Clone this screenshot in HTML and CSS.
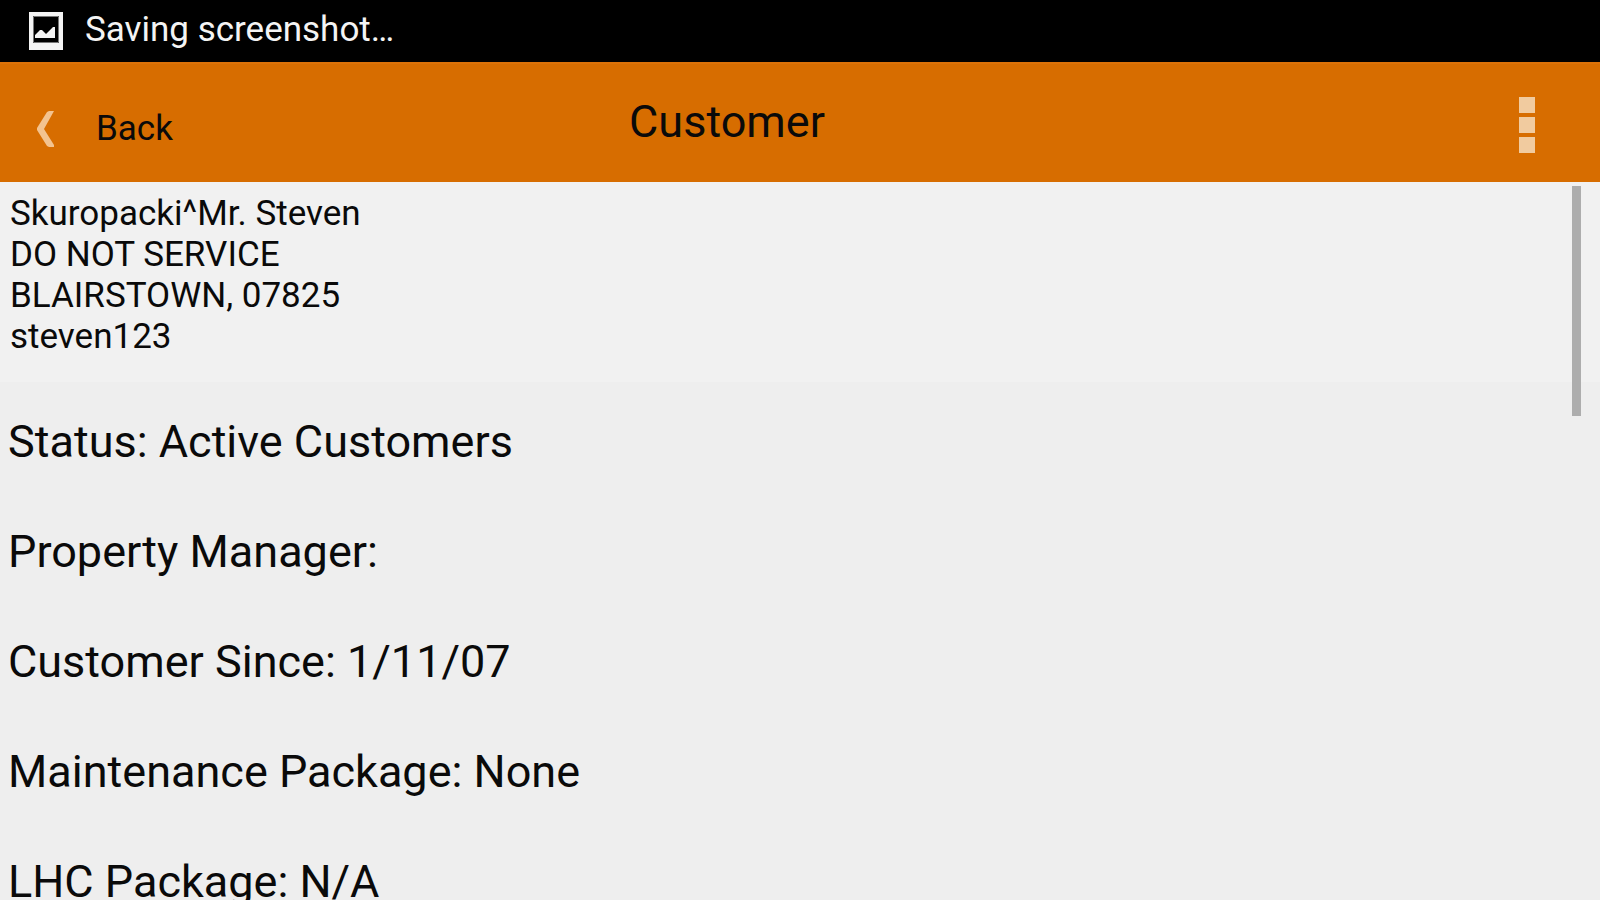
FILE: index.html
```html
<!DOCTYPE html>
<html lang="en">
<head>
<meta charset="utf-8">
<title>Customer</title>
<link rel="stylesheet" href="styles.css">
</head>
<body>
<div class="screen">
  <div class="statusbar" role="status">
    <svg class="statusbar-icon" width="36" height="40" viewBox="0 0 36 40" aria-hidden="true">
      <path fill="#f4f4f4" fill-rule="evenodd" d="M1 2H35V40H1ZM5 6V33H31V6Z"/>
      <path fill="none" stroke="#777" d="M5.500 6.500H30.500V32.500H5.500Z"/>
      <path fill="#f4f4f4" d="M7 28V25L12 20H14L18 24L25 17H27V28Z"/>
    </svg>
    <span>Saving screenshot…</span>
  </div>
  <header class="appbar">
    <button class="back" type="button">
      <svg width="18" height="38" viewBox="0 0 18 38" aria-hidden="true">
        <path fill="#f3c38f" d="M11 2L13 1H18L8 19L18 35V37H13L11 36L1 20V18Z"/>
      </svg>
      <span>Back</span>
    </button>
    <h1 class="title">Customer</h1>
    <button class="menu" type="button" aria-label="More options">
      <svg width="16" height="56" viewBox="0 0 16 56" aria-hidden="true">
        <path fill="#f1cb9f" d="M0 0H16V16H0ZM0 20H16V36H0ZM0 40H16V56H0Z"/>
      </svg>
    </button>
  </header>
  <main class="content">
    <address class="contact">
      Skuropacki^Mr. Steven<br>
      DO NOT SERVICE<br>
      BLAIRSTOWN, 07825<br>
      steven123
    </address>
    <ul class="details">
      <li>Status: Active Customers</li>
      <li>Property Manager:</li>
      <li>Customer Since: 1/11/07</li>
      <li>Maintenance Package: None</li>
      <li>LHC Package: N/A</li>
    </ul>
    <div class="scroll-thumb"></div>
  </main>
</div>
</body>
</html>
```
FILE: styles.css
```css
* {
  box-sizing: border-box;
}

body {
  margin: 0;
  background: #eee;
  color: #0a0a0a;
  font-family: Roboto, "Liberation Sans", sans-serif;
  font-size: 35px;
  line-height: 41px;
}

.screen {
  display: flex;
  flex-direction: column;
  height: 100vh;
  overflow: hidden;
}

.statusbar {
  display: flex;
  flex: none;
  align-items: center;
  gap: 21px;
  padding: 9px 28px 12px;
  background: #000;
  color: #f4f4f4;
}

.statusbar-icon {
  flex: none;
}

.appbar {
  display: grid;
  flex: none;
  grid-template-columns: 200px 1fr 346px;
  min-height: 120px;
  background: #d76d00;
  border-top: 2px solid #dc7208;
}

.back,
.menu {
  display: flex;
  align-items: center;
  border: 0;
  background: none;
  color: inherit;
  font: inherit;
  cursor: pointer;
}

.back {
  gap: 42px;
  padding: 11px 0 0 36px;
}

.menu {
  justify-content: flex-end;
  padding: 4px 65px 0 0;
}

.title {
  align-self: center;
  margin: 0;
  padding-bottom: 2px;
  font-size: 45px;
  font-weight: 400;
  line-height: 54px;
  text-align: center;
}

.content {
  position: relative;
  flex: 1;
  min-height: 0;
  overflow: hidden;
  background: linear-gradient(#f1f1f1 200px, #eee 200px);
}

.contact {
  padding: 11px 10px 0;
  font-style: normal;
}

.details {
  display: grid;
  gap: 56px;
  margin: 0;
  padding: 58px 8px 0;
  list-style: none;
  font-size: 45px;
  line-height: 54px;
}

.scroll-thumb {
  position: absolute;
  top: 4px;
  right: 19px;
  width: 9px;
  height: 230px;
  background: #adadad;
}
```
